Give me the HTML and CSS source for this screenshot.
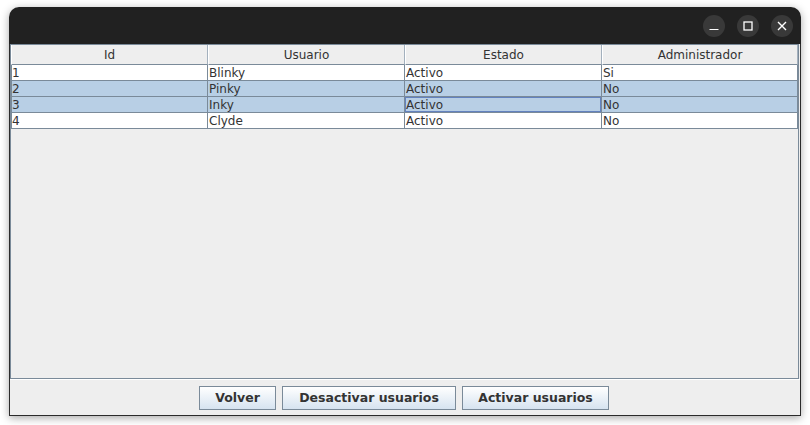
FILE: index.html
```html
<!DOCTYPE html>
<html>
<head>
<meta charset="utf-8">
<link rel="stylesheet" href="styles.css">
</head>
<body>
<div class="window">
  <div class="titlebar">
    <div class="ctl">
      <svg width="10" height="10" viewBox="0 0 10 10"><line x1="0.5" y1="8.5" x2="9.5" y2="8.5" stroke="#fff" stroke-width="1.2"/></svg>
    </div>
    <div class="ctl">
      <svg width="10" height="10" viewBox="0 0 10 10"><rect x="1" y="1" width="8" height="8" fill="none" stroke="#fff" stroke-width="1.3"/></svg>
    </div>
    <div class="ctl">
      <svg width="10" height="10" viewBox="0 0 10 10"><path d="M1 1 L9 9 M9 1 L1 9" stroke="#fff" stroke-width="1.4" fill="none"/></svg>
    </div>
  </div>
  <div class="content">
    <div class="scrollpane">
      <div class="grid">
        <div class="th">Id</div>
        <div class="th">Usuario</div>
        <div class="th">Estado</div>
        <div class="th">Administrador</div>

        <div class="td">1</div><div class="td">Blinky</div><div class="td">Activo</div><div class="td">Si</div>
        <div class="td sel">2</div><div class="td sel">Pinky</div><div class="td sel">Activo</div><div class="td sel">No</div>
        <div class="td sel">3</div><div class="td sel">Inky</div><div class="td sel focus">Activo</div><div class="td sel">No</div>
        <div class="td">4</div><div class="td">Clyde</div><div class="td">Activo</div><div class="td">No</div>
      </div>
    </div>
    <div class="sep"></div>
    <div class="buttons">
      <button class="btn w1">Volver</button>
      <button class="btn w2">Desactivar usuarios</button>
      <button class="btn w3">Activar usuarios</button>
    </div>
  </div>
</div>
</body>
</html>
```

FILE: styles.css
```css
html, body {
  margin: 0;
  padding: 0;
  background: #ffffff;
  width: 810px;
  height: 425px;
  overflow: hidden;
}

body {
  font-family: "DejaVu Sans", sans-serif;
}

.window {
  margin: 7px 0 0 9px;
  width: 792px;
  height: 409px;
  border-radius: 10px 10px 0 0;
  overflow: hidden;
  box-shadow: 0 2px 9px rgba(0, 0, 0, 0.35);
  display: flex;
  flex-direction: column;
}

.titlebar {
  height: 37px;
  background: #212121;
  display: flex;
  justify-content: flex-end;
  align-items: center;
  gap: 12px;
  padding-right: 8px;
  flex: none;
}

.ctl {
  width: 22px;
  height: 22px;
  border-radius: 50%;
  background: #393939;
  display: flex;
  align-items: center;
  justify-content: center;
}

.content {
  flex: 1;
  background: #eeeeee;
  border: 1px solid #2b2b2b;
  border-top: none;
  display: flex;
  flex-direction: column;
}

.scrollpane {
  height: 335px;
  width: 789px;
  box-sizing: border-box;
  border: 1px solid #7a8a99;
  background: #eeeeee;
  flex: none;
}

.grid {
  display: grid;
  grid-template-columns: 197px 197px 197px 196px;
  font-size: 12px;
  color: #333333;
}

.th {
  height: 20px;
  box-sizing: border-box;
  background: #eeeeee;
  border-right: 1px solid #a3b0bd;
  border-bottom: 1px solid #7a8a99;
  border-left: 1px solid #ffffff;
  text-align: center;
  line-height: 19px;
  padding-top: 1px;
}

.td {
  height: 16px;
  box-sizing: border-box;
  background: #ffffff;
  border-right: 1px solid #7a8a99;
  border-bottom: 1px solid #7a8a99;
  padding-left: 1px;
  padding-top: 1px;
  line-height: 14px;
  white-space: nowrap;
  overflow: hidden;
}

.td:nth-child(4n+1) {
  border-left: 1px solid #7a8a99;
  padding-left: 0;
}

.td.sel {
  background: #b8cfe5;
}

.td.focus {
  box-shadow: inset 0 0 0 1px #6382bf;
}

.sep {
  height: 1px;
  background: #ffffff;
  flex: none;
}

.buttons {
  flex: 1;
  display: flex;
  justify-content: center;
  align-items: center;
  gap: 6px;
  padding-right: 2px;
}

.btn {
  height: 24px;
  box-sizing: border-box;
  border: 1px solid #7a8a99;
  border-radius: 0;
  background: linear-gradient(#ffffff, #d6e3f0);
  font-family: "DejaVu Sans", sans-serif;
  font-weight: bold;
  font-size: 12.5px;
  color: #333333;
  padding: 0;
  margin: 0;
}

.w1 { width: 77px; }
.w2 { width: 174px; }
.w3 { width: 147px; }
```
